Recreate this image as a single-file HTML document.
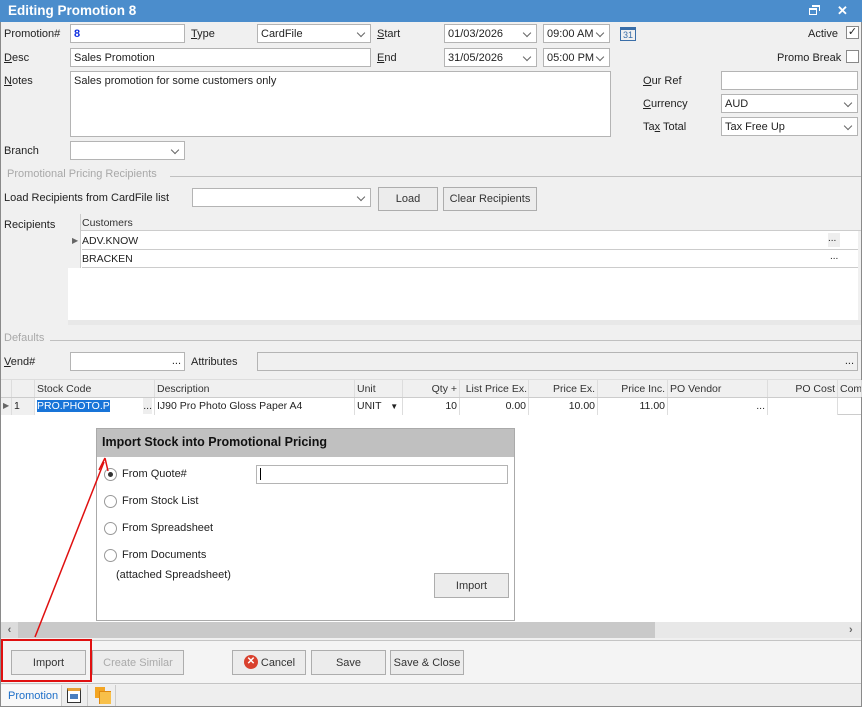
<!DOCTYPE html>
<html><head><meta charset="utf-8"><style>
*{box-sizing:border-box;margin:0;padding:0}
body{width:862px;height:707px;overflow:hidden;background:#f0f0f0;font-family:"Liberation Sans",Arial,sans-serif;font-size:11px;color:#222;position:relative}
.a{position:absolute;white-space:nowrap}
.in{position:absolute;background:#fff;border:1px solid #b4b4b4;height:19px;padding:2px 3px;line-height:14px;font-size:11px}
.dd::after{content:"";position:absolute;right:6px;top:5px;width:5px;height:5px;border-right:1px solid #666;border-bottom:1px solid #666;transform:rotate(45deg)}
.btn{position:absolute;background:#ececec;border:1px solid #adadad;text-align:center;font-size:11px;color:#333}
.u{text-decoration:underline}
.cb{position:absolute;width:13px;height:13px;border:1px solid #888;background:#fff}
.hd{position:absolute;top:380px;height:17px;line-height:18px;border-right:1px solid #ddd;padding:0 2px;font-size:10.5px;color:#333;overflow:hidden}
.c{position:absolute;top:398px;height:17px;line-height:16px;border-right:1px solid #ddd;padding:0 2px;font-size:10.5px;background:#fff}
.r{text-align:right}
.rad{position:absolute;width:13px;height:13px;border:1px solid #999;border-radius:50%;background:#fff}
</style></head><body>
<div class="a" style="left:0;top:0;width:862px;height:707px;border:1px solid #8a8a8a"></div>
<div class="a" style="left:0;top:0;width:862px;height:22px;background:#4b8dcc"></div>
<div class="a" style="left:8px;top:3px;color:#fff;font-weight:bold;font-size:13.5px">Editing Promotion 8</div>
<div class="a" style="left:809px;top:8px;width:8px;height:7px;border:1.5px solid #fff;border-top-width:2px"></div>
<div class="a" style="left:812px;top:5px;width:8px;height:6px;border-top:2px solid #fff;border-right:1.5px solid #fff"></div>
<div class="a" style="left:837px;top:3px;color:#fff;font-size:13px;font-weight:bold">✕</div>

<div class="a" style="left:4px;top:28px">Promotion#</div>
<div class="in" style="left:70px;top:24px;width:115px;color:#1030e0;font-weight:bold">8</div>
<div class="a" style="left:191px;top:28px"><span class="u">T</span>ype</div>
<div class="in dd" style="left:257px;top:24px;width:114px">CardFile</div>
<div class="a" style="left:377px;top:28px"><span class="u">S</span>tart</div>
<div class="in dd" style="left:444px;top:24px;width:93px">01/03/2026</div>
<div class="in dd" style="left:543px;top:24px;width:67px">09:00 AM</div>
<div class="a" style="left:620px;top:27px;width:16px;height:14px;border:1px solid #3a6ea8;border-top:3px solid #3a6ea8;font-size:9px;color:#3a6ea8;text-align:center;line-height:10px">31</div>
<div class="a" style="left:808px;top:28px">Active</div>
<div class="cb" style="left:846px;top:26px;font-size:11px;line-height:11px;text-align:center">✓</div>

<div class="a" style="left:4px;top:52px"><span class="u">D</span>esc</div>
<div class="in" style="left:70px;top:48px;width:301px">Sales Promotion</div>
<div class="a" style="left:377px;top:52px"><span class="u">E</span>nd</div>
<div class="in dd" style="left:444px;top:48px;width:93px">31/05/2026</div>
<div class="in dd" style="left:543px;top:48px;width:67px">05:00 PM</div>
<div class="a" style="left:777px;top:52px">Promo Break</div>
<div class="cb" style="left:846px;top:50px"></div>

<div class="a" style="left:4px;top:75px"><span class="u">N</span>otes</div>
<div class="in" style="left:70px;top:71px;width:541px;height:66px">Sales promotion for some customers only</div>
<div class="a" style="left:643px;top:75px"><span class="u">O</span>ur Ref</div>
<div class="in" style="left:721px;top:71px;width:137px"></div>
<div class="a" style="left:643px;top:98px"><span class="u">C</span>urrency</div>
<div class="in dd" style="left:721px;top:94px;width:137px">AUD</div>
<div class="a" style="left:643px;top:121px">Ta<span class="u">x</span> Total</div>
<div class="in dd" style="left:721px;top:117px;width:137px">Tax Free Up</div>

<div class="a" style="left:4px;top:145px">Branch</div>
<div class="in dd" style="left:70px;top:141px;width:115px"></div>

<div class="a" style="left:7px;top:168px;color:#a8a8a8">Promotional Pricing Recipients</div>
<div class="a" style="left:170px;top:176px;width:691px;border-top:1px solid #c0c0c0"></div>
<div class="a" style="left:4px;top:192px">Load Recipients from CardFile list</div>
<div class="in dd" style="left:192px;top:188px;width:179px"></div>
<div class="btn" style="left:378px;top:187px;width:60px;height:24px;line-height:23px">Load</div>
<div class="btn" style="left:443px;top:187px;width:94px;height:24px;line-height:23px">Clear Recipients</div>

<div class="a" style="left:4px;top:219px">Recipients</div>
<div class="a" style="left:68px;top:214px;width:790px;height:106px;background:#fff"></div>
<div class="a" style="left:68px;top:214px;width:793px;height:17px;background:#f0f0f0;border-bottom:1px solid #ccc"></div>
<div class="a" style="left:82px;top:217px;font-size:10.5px;color:#333">Customers</div>
<div class="a" style="left:68px;top:214px;width:13px;height:54px;border-right:1px solid #ccc;background:#f0f0f0"></div>
<div class="a" style="left:82px;top:232px;width:776px;height:18px;border-bottom:1px solid #ccc"></div>
<div class="a" style="left:72px;top:236px;font-size:8px;color:#666">▶</div>
<div class="a" style="left:82px;top:235px;font-size:10.5px">ADV.KNOW</div>
<div class="a" style="left:828px;top:233px;width:12px;height:14px;background:#eee;font-size:10px">...</div>
<div class="a" style="left:82px;top:250px;width:776px;height:18px;border-bottom:1px solid #ccc"></div>
<div class="a" style="left:82px;top:253px;font-size:10.5px">BRACKEN</div>
<div class="a" style="left:830px;top:251px;font-size:10px">...</div>
<div class="a" style="left:68px;top:320px;width:793px;height:5px;background:#e8e8e8"></div>

<div class="a" style="left:4px;top:332px;color:#a8a8a8">Defaults</div>
<div class="a" style="left:50px;top:340px;width:811px;border-top:1px solid #c0c0c0"></div>
<div class="a" style="left:4px;top:356px"><span class="u">V</span>end#</div>
<div class="in" style="left:70px;top:352px;width:115px"><span style="position:absolute;right:3px;top:1px">...</span></div>
<div class="a" style="left:191px;top:356px">Attributes</div>
<div class="in" style="left:257px;top:352px;width:601px;background:#f0f0f0"><span style="position:absolute;right:3px;top:1px">...</span></div>

<div class="a" style="left:1px;top:379px;width:860px;height:243px;background:#fff"></div>
<div class="a" style="left:1px;top:379px;width:860px;height:19px;background:#f0f0f0;border-bottom:1px solid #ccc;border-top:1px solid #ddd"></div>
<div class="hd" style="left:1px;width:11px"></div>
<div class="hd" style="left:12px;width:23px"></div>
<div class="hd" style="left:35px;width:120px">Stock Code</div>
<div class="hd" style="left:155px;width:200px">Description</div>
<div class="hd" style="left:355px;width:48px">Unit</div>
<div class="hd r" style="left:403px;width:57px">Qty +</div>
<div class="hd r" style="left:460px;width:69px;padding:0 1px">List Price Ex.</div>
<div class="hd r" style="left:529px;width:69px">Price Ex.</div>
<div class="hd r" style="left:598px;width:70px">Price Inc.</div>
<div class="hd" style="left:668px;width:100px">PO Vendor</div>
<div class="hd r" style="left:768px;width:70px">PO Cost</div>
<div class="hd" style="left:838px;width:24px">Com</div>
<div class="a" style="left:1px;top:398px;width:860px;height:17px;border-bottom:1px solid #ccc"></div>
<div class="c" style="left:1px;width:11px;background:#f0f0f0;font-size:8px;color:#666">▶</div>
<div class="c" style="left:12px;width:23px;background:#f0f0f0">1</div>
<div class="c" style="left:35px;width:120px"><span style="background:#1874d8;color:#fff">PRO.PHOTO.P</span><span style="position:absolute;right:2px;background:#eee">...</span></div>
<div class="c" style="left:155px;width:200px">IJ90 Pro Photo Gloss Paper A4</div>
<div class="c" style="left:355px;width:48px">UNIT <span style="font-size:8px;margin-left:6px">▼</span></div>
<div class="c r" style="left:403px;width:57px">10</div>
<div class="c r" style="left:460px;width:69px">0.00</div>
<div class="c r" style="left:529px;width:69px">10.00</div>
<div class="c r" style="left:598px;width:70px">11.00</div>
<div class="c r" style="left:668px;width:100px">...</div>
<div class="c" style="left:768px;width:70px"></div>

<div class="a" style="left:96px;top:428px;width:419px;height:193px;background:#fff;border:1px solid #aaa"></div>
<div class="a" style="left:97px;top:429px;width:417px;height:28px;background:#c0c0c0"></div>
<div class="a" style="left:102px;top:435px;font-weight:bold;font-size:12.5px;color:#111">Import Stock into Promotional Pricing</div>
<div class="rad" style="left:104px;top:468px"><div style="width:5px;height:5px;background:#333;border-radius:50%;margin:3px"></div></div>
<div class="a" style="left:122px;top:468px">From Quote#</div>
<div class="in" style="left:256px;top:465px;width:252px;height:19px"><span style="border-left:1px solid #000;display:inline-block;height:12px;margin-top:0"></span></div>
<div class="rad" style="left:104px;top:495px"></div>
<div class="a" style="left:122px;top:495px">From Stock List</div>
<div class="rad" style="left:104px;top:522px"></div>
<div class="a" style="left:122px;top:522px">From Spreadsheet</div>
<div class="rad" style="left:104px;top:549px"></div>
<div class="a" style="left:122px;top:549px">From Documents</div>
<div class="a" style="left:116px;top:569px">(attached Spreadsheet)</div>
<div class="btn" style="left:434px;top:573px;width:75px;height:25px;line-height:24px">Import</div>

<div class="a" style="left:1px;top:622px;width:860px;height:16px;background:#e8e8e8"></div>
<div class="a" style="left:18px;top:622px;width:637px;height:16px;background:#c9c9c9"></div>
<div class="a" style="left:1px;top:622px;width:17px;height:16px;background:#dcdcdc;color:#666;font-size:11px;font-weight:bold;text-align:center;line-height:16px">‹</div>
<div class="a" style="left:849px;top:622px;color:#666;font-size:11px;font-weight:bold;line-height:16px">›</div>
<div class="a" style="left:1px;top:640px;width:860px;height:44px;background:#f4f4f4;border-top:1px solid #c4c4c4;border-bottom:1px solid #c4c4c4"></div>
<div class="btn" style="left:11px;top:650px;width:75px;height:25px;line-height:24px">Import</div>
<div class="btn" style="left:92px;top:650px;width:92px;height:25px;line-height:24px;color:#aaa">Create Similar</div>
<div class="btn" style="left:232px;top:650px;width:74px;height:25px;line-height:24px;padding-left:18px">Cancel</div>
<div class="a" style="left:244px;top:655px;width:14px;height:14px;border-radius:50%;background:#d9412e;color:#fff;font-size:10px;font-weight:bold;text-align:center;line-height:14px">✕</div>
<div class="btn" style="left:311px;top:650px;width:75px;height:25px;line-height:24px">Save</div>
<div class="btn" style="left:390px;top:650px;width:74px;height:25px;line-height:24px">Save &amp; Close</div>
<div class="a" style="left:1px;top:639px;width:91px;height:43px;border:2px solid #e01010"></div>
<div class="a" style="left:1px;top:685px;width:860px;height:21px;background:#eeeeee"></div>
<div class="a" style="left:1px;top:685px;width:60px;height:21px;background:#f8f8f8"></div>
<div class="a" style="left:8px;top:690px;color:#1e6fc8">Promotion</div>
<div class="a" style="left:61px;top:685px;width:27px;height:21px;border-left:1px solid #ccc;border-right:1px solid #ccc"></div>
<div class="a" style="left:67px;top:688px;width:14px;height:15px;border:1px solid #333;background:#fff;border-top:3px solid #e5a23a"></div>
<div class="a" style="left:70px;top:694px;width:8px;height:5px;background:#4a7fc0"></div>
<div class="a" style="left:88px;top:685px;width:28px;height:21px;border-right:1px solid #ccc"></div>
<div class="a" style="left:95px;top:687px;width:10px;height:11px;background:#f3a523"></div>
<div class="a" style="left:99px;top:691px;width:12px;height:13px;background:#f8c04a;border-left:1px solid #e08a10;border-top:1px solid #e08a10"></div>

<svg class="a" style="left:0;top:0" width="862" height="707"><line x1="35" y1="637" x2="104" y2="462" stroke="#e01010" stroke-width="1.5"/><path d="M105 458 L99 470 M105 458 L108 471" stroke="#e01010" stroke-width="1.5" fill="none"/></svg>
</body></html>
